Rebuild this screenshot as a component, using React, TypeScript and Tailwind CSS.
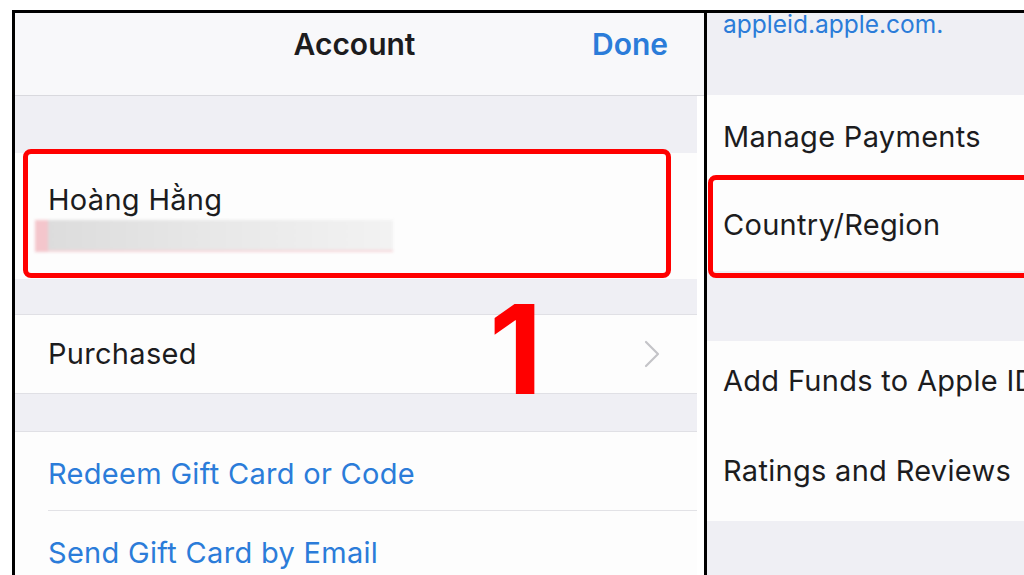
function Chevron() {
  return (
    <svg width="18" height="28" viewBox="0 0 18 28" fill="none" className="text-[#c4c4c8]">
      <polyline points="3,2 15,14 3,26" stroke="currentColor" strokeWidth="2.2" strokeLinecap="round" strokeLinejoin="round" />
    </svg>
  );
}

function LeftPanel() {
  return (
    <div className="relative w-[689px] shrink-0 bg-white flex flex-col">
      <header className="h-[83px] shrink-0 bg-[#f8f8fa] border-b border-[#d9d9de] grid grid-cols-[1fr_auto_1fr] items-center pr-[10px] pb-[20px]">
        <div />
        <h1 className="text-[30px] font-semibold">Account</h1>
        <button className="justify-self-end mr-[26px] text-[30px] font-semibold text-[#2b7cd9]">
          Done
        </button>
      </header>

      <div className="w-[682px] flex-1 flex flex-col bg-[#efeff4] text-[29px] tracking-[0.3px]">
        <div className="h-[57px] shrink-0" />

        <div className="h-[126px] shrink-0 bg-[#fdfdfd] pl-[20px] pt-[29px] flex flex-col">
          <span className="ml-[13px] leading-[35px]">Hoàng Hằng</span>
          <div className="mt-[3px] h-[32px] w-[358px] flex blur-[1.5px]">
            <div className="w-[13px] bg-[#f4c6cc]" />
            <div className="flex-1 bg-gradient-to-r from-[#dcdcdc] via-[#e8e8e8] to-[#f2f2f2] border-b-2 border-[#f6d4d8]" />
          </div>
        </div>

        <div className="h-[35px] shrink-0" />

        <div className="h-[80px] shrink-0 bg-[#fdfdfd] border-y border-[#e0e0e5] flex items-center justify-between pl-[33px] pr-[36px]">
          <span>Purchased</span>
          <Chevron />
        </div>

        <div className="h-[37px] shrink-0" />

        <div className="shrink-0 bg-[#fdfdfd] border-t border-[#e0e0e5] text-[#2b7cd9]">
          <div className="h-[78px] flex items-center pt-[6px] pl-[33px]">
            <span>Redeem Gift Card or Code</span>
          </div>
          <div className="ml-[33px] h-px bg-[#e2e2e6]" />
          <div className="h-[78px] flex items-center pt-[6px] pl-[33px]">
            <span>Send Gift Card by Email</span>
          </div>
        </div>
      </div>

      <div className="absolute left-[8px] top-[136px] w-[648px] h-[129px] border-[5px] border-[#ff0000] rounded-[8px]" />
      <span className="absolute left-[474px] top-[274px] text-[124px] font-bold leading-none tracking-normal text-[#ff0000]">
        1
      </span>
    </div>
  );
}

function RightPanel() {
  return (
    <div className="relative flex-1 overflow-hidden bg-[#efeff4] flex flex-col text-[29px] tracking-[0.3px]">
      <div className="h-[82px] shrink-0 pl-[16px]">
        <span className="block text-[24.5px] tracking-normal leading-[28px] -mt-[3px] text-[#2b7cd9]">appleid.apple.com.</span>
      </div>
      <div className="h-[84px] shrink-0 bg-[#fdfdfd] flex items-center pl-[16px]">
        <span className="whitespace-nowrap">Manage Payments</span>
      </div>
      <div className="h-[92px] shrink-0 bg-[#fdfdfd] flex items-center pl-[16px]">
        <span className="whitespace-nowrap">Country/Region</span>
      </div>
      <div className="h-[70px] shrink-0" />
      <div className="h-[80px] shrink-0 bg-[#fdfdfd] flex items-center pl-[16px]">
        <span className="whitespace-nowrap">Add Funds to Apple ID</span>
      </div>
      <div className="h-[100px] shrink-0 bg-[#fdfdfd] flex items-center pl-[16px]">
        <span className="whitespace-nowrap">Ratings and Reviews</span>
      </div>

      <div className="absolute left-[1px] top-[162px] w-[330px] h-[103px] border-[5px] border-[#ff0000] rounded-[8px]" />
    </div>
  );
}

export default function App() {
  return (
    <div className="w-[1024px] h-[575px] overflow-hidden bg-white pt-[10px] pl-[12px] font-['Inter',sans-serif] text-[#1c1c1e]">
      <div className="flex h-full border-t-[3px] border-l-[3px] border-black">
        <LeftPanel />
        <div className="w-[3px] shrink-0 bg-black" />
        <RightPanel />
      </div>
    </div>
  );
}
